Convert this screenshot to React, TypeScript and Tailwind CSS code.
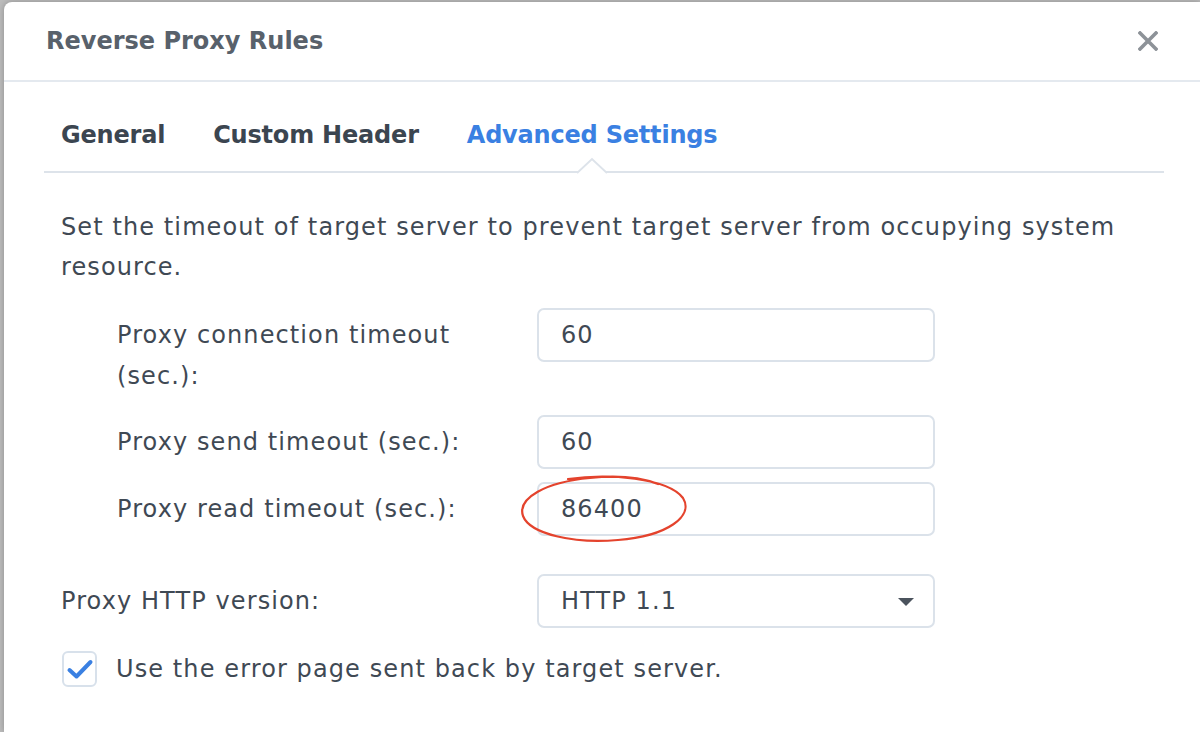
import React from "react";

const font = { fontFamily: '"DejaVu Sans", Verdana, sans-serif' };

function Field({ value, children }: { value: string; children?: React.ReactNode }) {
  return (
    <div className="relative w-[398px] h-[54px] shrink-0 rounded-[7px] border-2 border-[#dbe2ea] bg-white flex items-center pl-[22px] text-[#3f4954]">
      {value}
      {children}
    </div>
  );
}

function Ellipse() {
  return (
    <svg
      className="absolute left-[-21px] top-[-12px] pointer-events-none"
      width="174"
      height="76"
      viewBox="0 0 174 76"
    >
      <path
        d="M50 7 C90 1 150 6 165 26 C176 44 150 64 100 68 C56 72 12 62 5 44 C-1 26 28 10 72 6 C100 3 124 6 140 12"
        fill="none"
        stroke="#e4432d"
        strokeWidth="2.2"
        strokeLinecap="round"
      />
    </svg>
  );
}

export default function App() {
  return (
    <div className="w-[1200px] h-[732px] overflow-hidden bg-[#bcbcbc] flex" style={font}>
      <div className="ml-[4px] mt-[2px] flex-1 bg-white rounded-tl-[8px] shadow-[0_0_6px_rgba(0,0,0,0.25)] flex flex-col">
        {/* header */}
        <div className="h-[80px] shrink-0 border-b-2 border-[#e4e9ef] flex items-center justify-between pl-[42px] pr-[42px]">
          <span className="text-[24px] font-bold text-[#58616b] leading-[32px]">Reverse Proxy Rules</span>
          <svg width="20" height="20" viewBox="0 0 20 20">
            <path d="M2 2 L18 18 M18 2 L2 18" stroke="#8d9298" strokeWidth="3.6" strokeLinecap="square" />
          </svg>
        </div>

        {/* tabs */}
        <div className="relative ml-[40px] mr-[36px] h-[91px] shrink-0 border-b-2 border-[#dde3ea] flex pl-[17px] pt-[37px] gap-[48px] text-[24px] font-bold leading-[32px] tracking-[-0.2px]">
          <span className="text-[#3b4550]">General</span>
          <span className="text-[#3b4550]">Custom Header</span>
          <span className="relative text-[#3a80e2]">
            Advanced Settings
            <svg
              className="absolute left-1/2 -translate-x-1/2 top-[38px]"
              width="30"
              height="18"
              viewBox="0 0 30 18"
            >
              <path d="M0 16 L15 2 L30 16" fill="#ffffff" stroke="#dde3ea" strokeWidth="2" />
              <rect x="3" y="15" width="24" height="3" fill="#ffffff" />
            </svg>
          </span>
        </div>

        {/* content */}
        <div className="pl-[57px] pr-[40px] pt-[34px] text-[24px] text-[#3f4954] tracking-[1.1px]">
          <p className="leading-[40px] pr-[40px]">
            Set the timeout of target server to prevent target server from occupying system resource.
          </p>

          <div className="mt-[21px] flex items-start">
            <div className="w-[476px] shrink-0 pl-[56px] pr-[80px] pt-[7px] leading-[41px]">
              Proxy connection timeout (sec.):
            </div>
            <Field value="60" />
          </div>

          <div className="mt-[18px] flex items-center">
            <div className="w-[476px] shrink-0 pl-[56px] leading-[32px]">Proxy send timeout (sec.):</div>
            <Field value="60" />
          </div>

          <div className="mt-[13px] flex items-center">
            <div className="w-[476px] shrink-0 pl-[56px] leading-[32px]">Proxy read timeout (sec.):</div>
            <Field value="86400">
              <Ellipse />
            </Field>
          </div>

          <div className="mt-[38px] flex items-center">
            <div className="w-[476px] shrink-0 leading-[32px]">Proxy HTTP version:</div>
            <div className="relative w-[398px] h-[54px] rounded-[7px] border-2 border-[#dbe2ea] flex items-center pl-[22px]">
              HTTP 1.1
              <svg className="absolute right-[19px] top-[22px]" width="16" height="8" viewBox="0 0 16 8">
                <path d="M0 0 L16 0 L8 8 Z" fill="#4b535d" />
              </svg>
            </div>
          </div>

          <div className="mt-[23px] flex items-center">
            <div className="ml-[1px] w-[35px] h-[36px] rounded-[6px] border-2 border-[#d8e1eb] flex items-center justify-center">
              <svg width="28" height="22" viewBox="0 0 28 22">
                <path d="M3.5 12 L10.5 18.5 L24.5 4" fill="none" stroke="#3a80e2" strokeWidth="4" strokeLinecap="round" strokeLinejoin="round" />
              </svg>
            </div>
            <span className="ml-[19px] leading-[32px]">Use the error page sent back by target server.</span>
          </div>
        </div>
      </div>
    </div>
  );
}
